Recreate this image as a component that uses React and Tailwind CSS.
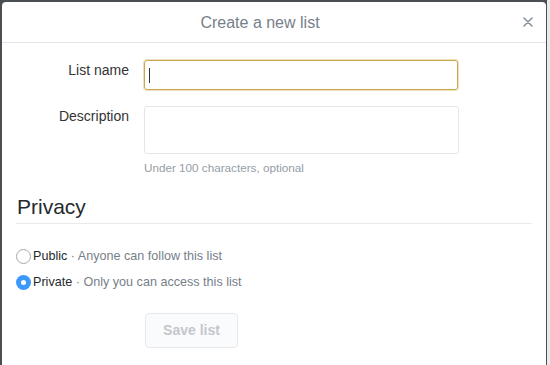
import React, { useState } from 'react';

const App = () => {
  const [privacy, setPrivacy] = useState('private');

  return (
    <div className="w-[550px] h-[365px] overflow-hidden bg-[#4b4f54] flex" style={{ fontFamily: '"Liberation Sans", Arial, sans-serif' }}>
      <div className="mt-[2px] ml-[2px] w-[545px] h-[400px] bg-white rounded-[4px] flex flex-col">
        {/* Header */}
        <div className="relative h-[41px] border-b border-[#e1e4e8] flex items-center justify-center pr-[28px]">
          <h1 className="text-[16px] text-[#76808a] pt-[1px]">Create a new list</h1>
          <button className="absolute right-[10px] top-[12px] w-[16px] h-[16px] flex items-center justify-center text-[#8a939c]">
            <svg width="10" height="10" viewBox="0 0 10 10" stroke="currentColor" strokeWidth="1.6" strokeLinecap="round">
              <path d="M1 1 L9 9 M9 1 L1 9" />
            </svg>
          </button>
        </div>

        {/* Form */}
        <div className="pt-[17px] px-[15px]">
          <div className="flex items-start">
            <label className="w-[112px] text-right text-[14px] leading-[18px] pt-[1px] text-[#333]">List name</label>
            <div className="ml-[15px]">
              <div className="w-[314px] h-[30px] border border-[#c9a94b] rounded-[3px] shadow-[0_0_0_1px_rgba(201,169,75,0.35)] flex items-center px-[4px]">
                <span className="w-[1px] h-[15px] bg-[#333]"></span>
              </div>
            </div>
          </div>

          <div className="flex items-start mt-[16px]">
            <label className="w-[112px] text-right text-[14px] leading-[18px] pt-[1px] text-[#333]">Description</label>
            <div className="ml-[15px]">
              <textarea className="block w-[315px] h-[48px] border border-[#e3e7eb] rounded-[3px] resize-none outline-none"></textarea>
              <p className="text-[11.7px] leading-[16px] text-[#959da5] mt-[6px]">Under 100 characters, optional</p>
            </div>
          </div>
        </div>

        {/* Privacy */}
        <div className="px-[14px] mt-[19px]">
          <h2 className="text-[21px] leading-[24px] text-[#24292e] pl-[1px] pb-[4px] border-b border-[#e8eaed]">Privacy</h2>

          <div className="mt-[24px] flex flex-col gap-[10px] text-[12.6px] leading-[16px]">
            <label className="flex items-center cursor-pointer" onClick={() => setPrivacy('public')}>
              <span className={`w-[15px] h-[15px] rounded-full flex items-center justify-center ${privacy === 'public' ? 'bg-[#3b99fc]' : 'border border-[#a8a8a8] bg-white'}`}>
                {privacy === 'public' && <span className="w-[5px] h-[5px] rounded-full bg-white"></span>}
              </span>
              <span className="ml-[2px] text-[#24292e]">Public</span>
              <span className="text-[#76808a]">&nbsp;· Anyone can follow this list</span>
            </label>
            <label className="flex items-center cursor-pointer" onClick={() => setPrivacy('private')}>
              <span className={`w-[15px] h-[15px] rounded-full flex items-center justify-center ${privacy === 'private' ? 'bg-[#3b99fc]' : 'border border-[#a8a8a8] bg-white'}`}>
                {privacy === 'private' && <span className="w-[5px] h-[5px] rounded-full bg-white"></span>}
              </span>
              <span className="ml-[2px] text-[#24292e]">Private</span>
              <span className="text-[#76808a]">&nbsp;· Only you can access this list</span>
            </label>
          </div>

          <div className="mt-[23px] pl-[129px]">
            <button disabled className="w-[93px] h-[35px] bg-[#fafbfc] border border-[#e6e9ec] rounded-[4px] text-[14px] font-bold text-[#c3c7cc]">
              Save list
            </button>
          </div>
        </div>
      </div>
      <div className="w-[3px] h-full bg-[#e9eaec] ml-[1px]"></div>
    </div>
  );
};

export default App;
